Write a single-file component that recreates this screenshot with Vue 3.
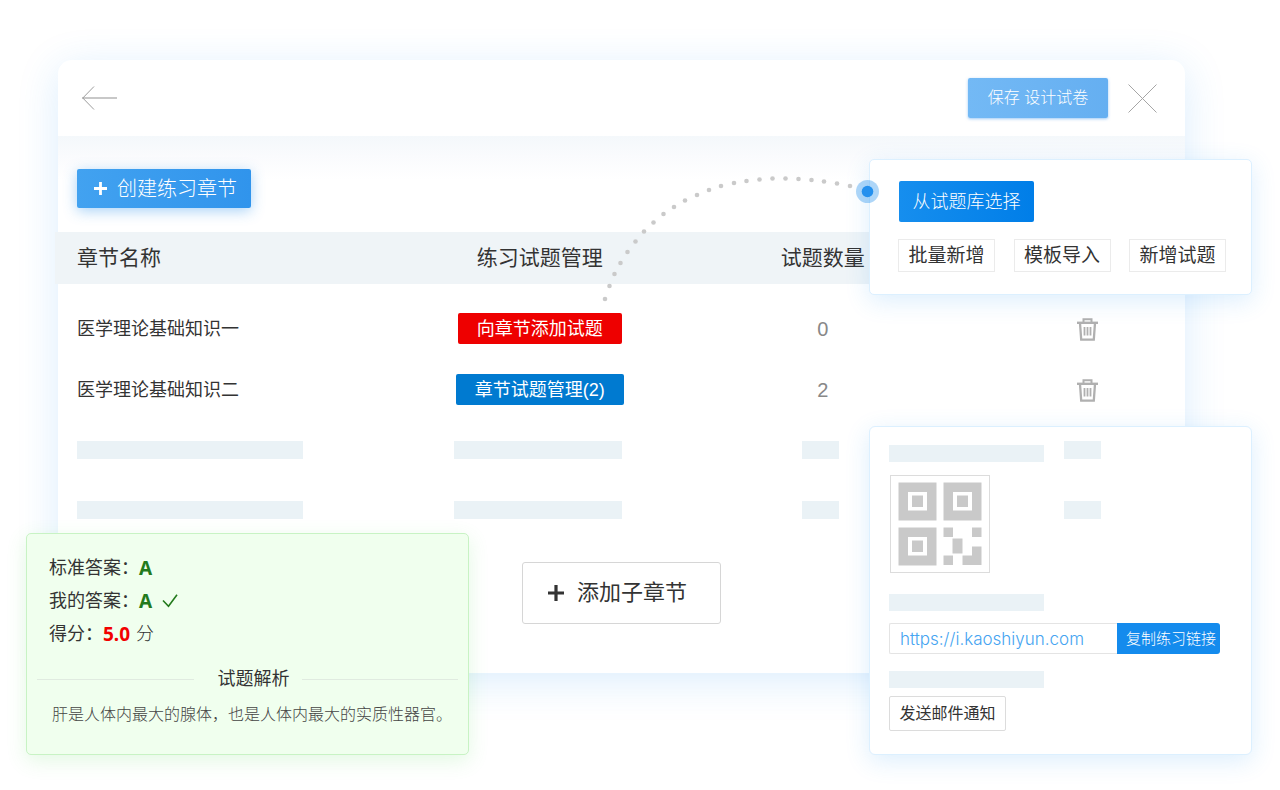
<script setup>
const columns = ['章节名称', '练习试题管理', '试题数量', '']
const chapters = [
  { name: '医学理论基础知识一', action: '向章节添加试题', tone: 'red', count: 0 },
  { name: '医学理论基础知识二', action: '章节试题管理(2)', tone: 'blue', count: 2 },
]
const dots = [
  [605, 299], [609.5, 286], [614.5, 274], [620.5, 263], [627.5, 252], [635.5, 241.5],
  [644, 231.5], [653.5, 222.5], [663.5, 214], [674, 207], [685, 200.5], [697, 195],
  [709, 190], [721, 186], [734, 183], [746.5, 181], [759.5, 179.5], [772.5, 178.5],
  [785.5, 178.5], [798.5, 179], [811.5, 180], [824, 181.5], [837, 183.5], [850, 186],
]
const imports = ['批量新增', '模板导入', '新增试题']
const finders = [[8, 7], [53, 7], [8, 52]]
</script>

<template>
  <div class="stage">
    <main class="panel">
      <header class="topbar">
        <button class="icon-btn" aria-label="返回">
          <svg width="36" height="26" viewBox="0 0 36 26" fill="none">
            <path d="M0 13H35" stroke="#c8c8c8" stroke-width="2" />
            <path d="M12 1.500L.8 13L12 24.500" stroke="#9c9c9c" stroke-width="1" />
          </svg>
        </button>
        <div class="topbar-actions">
          <button class="save">保存 设计试卷</button>
          <button class="icon-btn" aria-label="关闭">
            <svg width="29" height="29" viewBox="0 0 29 29" fill="none" stroke="#a6a6a6" stroke-width="1">
              <path d="M.5 .5L28.500 28.500M28.500 .5L.5 28.500" />
            </svg>
          </button>
        </div>
      </header>

      <div class="toolbar">
        <button class="create">
          <svg width="13" height="13" viewBox="0 0 13 13" stroke="#fff" stroke-width="2.800">
            <path d="M0 6.500H13M6.500 0V13" />
          </svg>
          <span>创建练习章节</span>
        </button>
      </div>

      <table class="chapters">
        <colgroup>
          <col class="c-name" /><col class="c-manage" /><col class="c-count" /><col class="c-del" />
        </colgroup>
        <thead>
          <tr><th v-for="(c, i) in columns" :key="i" scope="col">{{ c }}</th></tr>
        </thead>
        <tbody>
          <tr v-for="c in chapters" :key="c.name">
            <td>{{ c.name }}</td>
            <td><button class="tag" :class="c.tone">{{ c.action }}</button></td>
            <td class="count">{{ c.count }}</td>
            <td>
              <button class="icon-btn" aria-label="删除">
                <svg width="21" height="23" viewBox="0 0 21 23" fill="none" stroke="#b0b0b0">
                  <path d="M0 4.800H21" stroke-width="2.400" />
                  <path d="M6.500 4V1.300H14.500V4" stroke-width="2" />
                  <path d="M3 5L4.200 21.700H16.800L18 5" stroke-width="2.300" />
                  <path d="M7.500 9V17.500M10.500 9V17.500M13.500 9V17.500" stroke-width="1.800" />
                </svg>
              </button>
            </td>
          </tr>
          <tr v-for="n in 2" :key="'s' + n" class="ghost-row">
            <td><i class="ghost g-name"></i></td>
            <td><i class="ghost g-manage"></i></td>
            <td><i class="ghost g-count"></i></td>
            <td><i class="ghost g-del"></i></td>
          </tr>
        </tbody>
      </table>

      <button class="add-child">
        <svg width="16" height="16" viewBox="0 0 16 16" stroke="#333" stroke-width="3.200">
          <path d="M0 8H16M8 0V16" />
        </svg>
        <span>添加子章节</span>
      </button>
    </main>

    <section class="pop source">
      <button class="pick">从试题库选择</button>
      <div class="import-row">
        <button v-for="t in imports" :key="t" class="outline">{{ t }}</button>
      </div>
    </section>

    <svg class="trail" width="280" height="136" viewBox="600 168 280 136">
      <circle v-for="(d, i) in dots" :key="i" :cx="d[0]" :cy="d[1]" r="2.300" fill="#cacaca" />
      <circle cx="867.500" cy="191.500" r="11.500" fill="#1f8ceb" fill-opacity=".36" />
      <circle cx="867.500" cy="191.500" r="5.800" fill="#2490ee" />
    </svg>

    <section class="pop share">
      <i class="ghost g-line"></i>
      <svg class="qr" width="100" height="98" viewBox="0 0 100 98">
        <rect x=".5" y=".5" width="99" height="97" fill="#fff" stroke="#dcdcdc" />
        <g fill="#c9c9c9">
          <g v-for="(f, i) in finders" :key="i">
            <rect :x="f[0] + .5" :y="f[1] + .5" width="38" height="38" />
            <rect :x="f[0] + 10" :y="f[1] + 10" width="19" height="18.500" fill="#fff" />
            <rect :x="f[0] + 14" :y="f[1] + 13.500" width="11" height="11.500" />
          </g>
          <path d="M53.500 52.500h9.500v9.500h-9.500zM82 52.500h9.500v9.500H82zM62.500 63.500h10v15h-10zM53.500 80.500h9.500v9.500h-9.500zM82 71.500h9.500V90H72.500v-9.500H82z" />
        </g>
      </svg>
      <i class="ghost g-line gap-lg"></i>
      <div class="link-row">
        <input type="text" readonly aria-label="练习链接" value="https://i.kaoshiyun.com" />
        <button class="copy">复制练习链接</button>
      </div>
      <i class="ghost g-line gap-md"></i>
      <button class="mail">发送邮件通知</button>
    </section>

    <section class="answer">
      <p>标准答案：<b class="ok">A</b></p>
      <p>
        我的答案：<b class="ok">A</b>
        <svg class="tick" width="16" height="14" viewBox="0 0 16 14" fill="none" stroke="#237a1c" stroke-width="1.600">
          <path d="M1 6.500L6.500 12.300L15 .8" />
        </svg>
      </p>
      <p>得分：<b class="score">5.0</b><span class="unit">分</span></p>
      <h2>试题解析</h2>
      <p class="explain">肝是人体内最大的腺体，也是人体内最大的实质性器官。</p>
    </section>
  </div>
</template>

<style>
body {
  margin: 0;
  background: #fff;
}
</style>

<style scoped>
.stage {
  position: relative;
  box-sizing: border-box;
  min-height: 790px;
  padding: 60px 95px 35px 58px;
  overflow: hidden;
  font-family: "Liberation Sans", "Noto Sans CJK SC", sans-serif;
  line-height: 24px;
  color: #333;
}
button,
input {
  box-sizing: border-box;
  margin: 0;
  padding: 0;
  border: 0;
  font: inherit;
  color: inherit;
}
button {
  cursor: pointer;
  white-space: nowrap;
}
.panel {
  background: #fff;
  border-radius: 14px;
  box-shadow: 0 8px 40px rgba(40, 150, 245, 0.17);
  padding-bottom: 49px;
}
.topbar {
  display: flex;
  justify-content: space-between;
  align-items: center;
  height: 76px;
  padding: 0 28px 0 24px;
  border-radius: 14px 14px 0 0;
}
.topbar-actions {
  display: flex;
  align-items: center;
  gap: 20px;
}
.icon-btn {
  display: inline-flex;
  background: none;
}
.save {
  width: 140px;
  height: 40px;
  border-radius: 2px;
  background: linear-gradient(90deg, #73b9f5, #65aff1);
  box-shadow: 0 1px 3px rgba(60, 150, 240, 0.5);
  color: #fff;
  font-size: 16px;
  font-weight: 300;
}
.toolbar {
  padding: 33px 19px 24px;
  background: linear-gradient(#f4f8fb, #fafbfd 20px, #fff 44px);
}
.create {
  display: flex;
  align-items: center;
  gap: 10px;
  height: 39px;
  padding: 0 14px 0 17px;
  border-radius: 2px;
  background: linear-gradient(90deg, #42a2f0, #3094ec);
  box-shadow: 0 3px 14px rgba(48, 148, 236, 0.42);
  color: #fff;
  font-size: 20px;
  font-weight: 300;
}
.chapters {
  width: calc(100% + 3px);
  margin-left: -3px;
  table-layout: fixed;
  border-collapse: collapse;
  font-size: 18px;
}
.c-name { width: 32.7%; }
.c-manage { width: 20.4%; }
.c-count { width: 29.7%; }
.c-del { width: 17.2%; }
th {
  height: 52px;
  padding: 0;
  background: #eff4f7;
  font-size: 21px;
  font-weight: 400;
  text-align: center;
}
td {
  height: 61px;
  padding: 0;
  text-align: center;
  vertical-align: middle;
}
.ghost-row td {
  height: 60px;
  padding-right: 4px;
}
.ghost-row td:last-child { padding-right: 10px; }
th:first-child,
td:first-child {
  padding-left: 22px;
  text-align: left;
}
tbody::before {
  content: "";
  display: block;
  height: 14px;
}
td .icon-btn { vertical-align: middle; }
.tag {
  height: 31px;
  padding: 0 19px;
  border-radius: 2px;
  color: #fff;
  font-size: 18px;
  vertical-align: middle;
}
.red { background: #ee0000; }
.blue { background: #007ad0; }
.count {
  color: #888;
  font-size: 20px;
}
.ghost {
  display: block;
  height: 18px;
  background: #eaf2f6;
}
.ghost-row .ghost { margin: 0 auto; }
.ghost-row .g-name {
  width: 226px;
  margin: 0;
}
.g-manage { width: 168px; }
.g-count { width: 37px; }
.g-del {
  position: relative;
  z-index: 2;
  width: 37px;
}
.add-child {
  display: flex;
  align-items: center;
  gap: 13px;
  height: 62px;
  margin: 22px auto 0;
  padding: 0 33px 0 25px;
  border: 1px solid #d6d6d6;
  border-radius: 3px;
  background: #fff;
  font-size: 22px;
}
.pop {
  position: absolute;
  z-index: 1;
  right: 28px;
  box-sizing: border-box;
  width: 383px;
  border: 1px solid #dcf0ff;
  border-radius: 5px;
  background: #fff;
  box-shadow: 0 6px 24px rgba(40, 150, 245, 0.16);
}
.source {
  top: 159px;
  padding: 21px 25px 22px 28px;
}
.pick {
  width: 135px;
  height: 41px;
  margin-left: 1px;
  border-radius: 2px;
  background: linear-gradient(90deg, #168eee, #007ee8);
  color: #fff;
  font-size: 18px;
  font-weight: 300;
}
.import-row {
  display: flex;
  justify-content: space-between;
  margin-top: 17px;
}
.outline {
  width: 97px;
  height: 33px;
  border: 1px solid #ebebeb;
  background: #fff;
  font-size: 19px;
}
.trail {
  position: absolute;
  z-index: 3;
  top: 168px;
  right: 400px;
  pointer-events: none;
}
.share {
  top: 426px;
  padding: 18px 31px 23px 19px;
  border-radius: 6px;
}
.g-line {
  width: 155px;
  height: 17px;
}
.qr {
  display: block;
  margin: 13px 0 0 1px;
}
.gap-lg { margin-top: 21px; }
.link-row {
  display: flex;
  height: 31px;
  margin-top: 12px;
}
.link-row input {
  flex: 1;
  min-width: 0;
  padding-left: 10px;
  border: 1px solid #e4e4e4;
  border-right: 0;
  border-radius: 2px 0 0 2px;
  background: #fff;
  color: #45a4f1;
  font-family: Inter, sans-serif;
  font-size: 17px;
  font-weight: 300;
}
.copy {
  padding: 0 4px 0 9px;
  border-radius: 0 3px 3px 0;
  background: #148bed;
  color: #fff;
  font-size: 15px;
  font-weight: 300;
}
.gap-md { margin-top: 17px; }
.mail {
  display: block;
  width: 117px;
  height: 35px;
  margin-top: 8px;
  border: 1px solid #dcdcdc;
  border-radius: 2px;
  background: #fff;
  font-size: 16px;
}
.answer {
  position: absolute;
  z-index: 1;
  top: 533px;
  left: 26px;
  box-sizing: border-box;
  width: 443px;
  padding: 17px 10px 26px;
  border: 1px solid #c8f3c4;
  border-radius: 5px;
  background: #f0ffee;
  box-shadow: 0 6px 20px rgba(80, 220, 80, 0.16);
  font-size: 18px;
}
.answer p {
  display: flex;
  align-items: center;
  height: 33px;
  margin: 0;
  padding-left: 12px;
}
.answer b {
  font-family: "Noto Sans", "Open Sans", sans-serif;
  font-weight: 700;
}
.ok {
  color: #237a1c;
  font-size: 19px;
}
.score {
  color: #f20000;
  font-size: 19px;
}
.tick { margin-left: 10px; }
.unit {
  margin-left: 6px;
  font-weight: 300;
}
.answer h2 {
  display: flex;
  align-items: center;
  gap: 12px;
  height: 26px;
  margin: 16px 0 0;
  font-size: 18px;
  font-weight: 400;
}
.answer h2::before,
.answer h2::after {
  content: "";
  flex: 1;
  height: 1px;
  background: #e0ebe0;
}
.answer h2::before { margin-right: 12px; }
.answer .explain {
  height: 26px;
  margin-top: 10px;
  padding-left: 15px;
  color: #444;
  font-size: 16px;
  font-weight: 300;
  white-space: nowrap;
}
</style>
